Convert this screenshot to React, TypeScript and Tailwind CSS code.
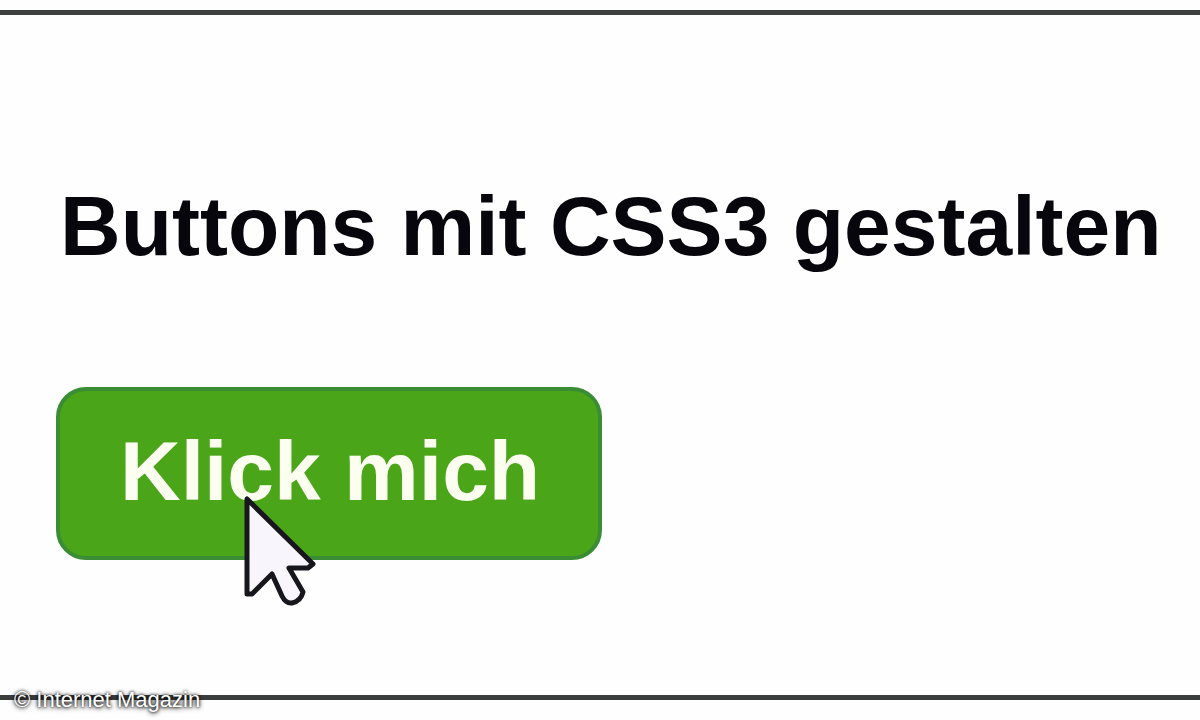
function Pointer() {
  return (
    <svg
      aria-hidden="true"
      viewBox="0 0 80 120"
      className="pointer-events-none absolute top-[103px] left-[182px] h-[120px] w-[80px]"
    >
      <path
        d="M9 9V104H14L34 84L44 106Q48 114 54 113Q63 111 65 102L51 78H70L75 74Z"
        fill="#f8f6fc"
        stroke="#17161d"
        strokeWidth="5"
        strokeLinejoin="round"
      />
    </svg>
  );
}

export default function App() {
  return (
    <main className="relative min-h-screen bg-[#fefefe] pt-[10px] font-['Liberation_Sans',Arial,sans-serif]">
      <section className="border-y-5 border-[#3c3d3d] px-14 pt-[163px] pb-[135px]">
        <h1 className="ml-1 text-[84px] leading-[96px] font-bold whitespace-nowrap text-[#06060c]">
          Buttons mit CSS3 gestalten
        </h1>
        <div className="relative mt-[113px] w-fit">
          <button
            type="button"
            className="block cursor-pointer rounded-[30px] border-4 border-[#3a8c35] bg-[#4aa519] pt-[32px] pr-[58px] pb-[37px] pl-[60px] text-[84px] leading-[96px] font-bold whitespace-nowrap text-[#fcfff0]"
          >
            Klick mich
          </button>
          <Pointer />
        </div>
      </section>
      <small className="absolute bottom-[6px] left-[14px] text-[22px] leading-[28px] text-white [text-shadow:0_0_3px_#000,0_1px_5px_#000]">
        © Internet Magazin
      </small>
    </main>
  );
}
